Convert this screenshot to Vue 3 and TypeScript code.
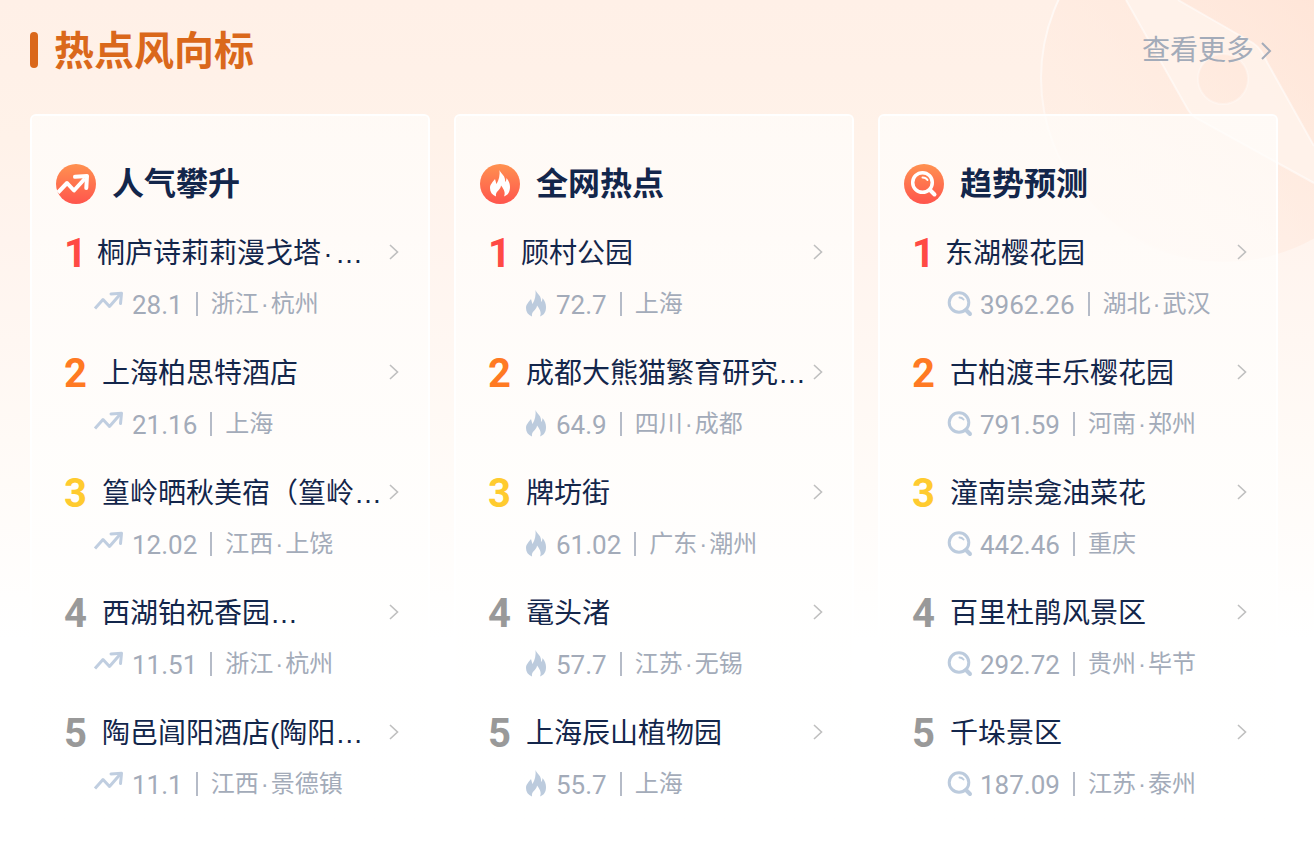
<script setup lang="ts">
type Kind = 'rise' | 'fire' | 'search'
interface Entry {
  name: string
  value: string
  place: string
}
interface Board {
  kind: Kind
  title: string
  entries: Entry[]
}

const boards: Board[] = [
  {
    kind: 'rise',
    title: '人气攀升',
    entries: [
      { name: '桐庐诗莉莉漫戈塔·…', value: '28.1', place: '浙江·杭州' },
      { name: '上海柏思特酒店', value: '21.16', place: '上海' },
      { name: '篁岭晒秋美宿（篁岭…', value: '12.02', place: '江西·上饶' },
      { name: '西湖铂祝香园…', value: '11.51', place: '浙江·杭州' },
      { name: '陶邑阊阳酒店(陶阳…', value: '11.1', place: '江西·景德镇' },
    ],
  },
  {
    kind: 'fire',
    title: '全网热点',
    entries: [
      { name: '顾村公园', value: '72.7', place: '上海' },
      { name: '成都大熊猫繁育研究…', value: '64.9', place: '四川·成都' },
      { name: '牌坊街', value: '61.02', place: '广东·潮州' },
      { name: '鼋头渚', value: '57.7', place: '江苏·无锡' },
      { name: '上海辰山植物园', value: '55.7', place: '上海' },
    ],
  },
  {
    kind: 'search',
    title: '趋势预测',
    entries: [
      { name: '东湖樱花园', value: '3962.26', place: '湖北·武汉' },
      { name: '古柏渡丰乐樱花园', value: '791.59', place: '河南·郑州' },
      { name: '潼南崇龛油菜花', value: '442.46', place: '重庆' },
      { name: '百里杜鹃风景区', value: '292.72', place: '贵州·毕节' },
      { name: '千垛景区', value: '187.09', place: '江苏·泰州' },
    ],
  },
]

const pieces = (text: string): string[] => text.split(/(·)/)
</script>

<template>
  <main class="panel">
    <svg class="compass" viewBox="0 0 274 264" aria-hidden="true">
      <defs>
        <linearGradient id="disc" x1="1" y1="0.1" x2="0.2" y2="0.8">
          <stop offset="0" stop-color="#ffdccb" stop-opacity="0.8" />
          <stop offset="1" stop-color="#ffe9dd" stop-opacity="0.3" />
        </linearGradient>
        <linearGradient id="rim" x1="0" y1="0" x2="0.5" y2="1">
          <stop offset="0" stop-color="#fff" stop-opacity="0.9" />
          <stop offset="1" stop-color="#fff" stop-opacity="0" />
        </linearGradient>
      </defs>
      <circle cx="184" cy="78" r="184" fill="url(#disc)" />
      <circle cx="184" cy="78" r="183" fill="none" stroke="url(#rim)" stroke-width="2" />
      <path
        d="M86 0 147 108Q150 114 156 118L274 183V146L227 62Q222 49 213 43L138 0Z M183 54a25 25 0 1 0 0.1 0Z"
        fill="#fff4ec"
        fill-opacity="0.8"
        fill-rule="evenodd"
      />
      <path
        d="M86 0 147 108Q150 114 156 118L274 183M138 0 213 43Q222 49 227 62L274 146"
        fill="none"
        stroke="#fff"
        stroke-opacity="0.5"
        stroke-width="2"
      />
      <circle cx="183" cy="79" r="25" fill="none" stroke="#fff" stroke-opacity="0.3" stroke-width="2" />
    </svg>

    <header class="head">
      <h1>热点风向标</h1>
      <a href="#" class="more">
        查看更多
        <svg width="12" height="20" viewBox="0 0 12 20" aria-hidden="true">
          <path d="M2 2 10 10 2 18" fill="none" stroke="#a3abb9" stroke-width="2" />
        </svg>
      </a>
    </header>

    <div class="boards">
      <section v-for="board in boards" :key="board.kind" class="board">
        <h2>
          <svg class="badge" viewBox="0 0 40 40" aria-hidden="true">
            <defs>
              <linearGradient :id="'badge-' + board.kind" x1="0" y1="0" x2="0" y2="1">
                <stop offset="0" stop-color="#ff9150" />
                <stop offset="1" stop-color="#ff554d" />
              </linearGradient>
            </defs>
            <circle cx="20" cy="20" r="20" :fill="`url(#badge-${board.kind})`" />
            <g v-if="board.kind === 'rise'" fill="none" stroke="#fff" stroke-width="4" stroke-linejoin="round">
              <path d="M2 28.500 11 19 18 26.500 29 14.500" />
              <path d="M19 12.800 31 12 30.300 24" stroke-linecap="round" />
            </g>
            <path
              v-else-if="board.kind === 'fire'"
              d="M19.500 6C21 10 26 12 25 18C26 17 26.500 15.500 26.500 14C29 17 30 20 30 23C30 28 28 31 24 32.500C25.500 29 24.500 26 21 21.500C21 26 15 27 16 32.500C12 31 10 28 10 24C10 20 13 18 15 15C16 18 16 19 16.500 20C19 16 20 11 19.500 6Z"
              fill="#fff"
            />
            <g v-else fill="none" stroke="#fff" stroke-linecap="round">
              <circle cx="18.500" cy="18.500" r="9.800" stroke-width="3.500" />
              <path d="M26 26 30.500 30.500" stroke-width="4" />
              <path d="M18.500 13.500Q22 13.500 23.500 16" stroke-width="2" />
            </g>
          </svg>
          {{ board.title }}
        </h2>

        <ol>
          <li v-for="(entry, i) in board.entries" :key="entry.name">
            <a href="#" class="entry">
              <span class="top">
                <span class="rank" :class="'rank-' + (i + 1)">{{ i + 1 }}</span>
                <span class="name"><span v-for="(p, k) in pieces(entry.name)" :key="k" :class="{ dot: p === '·' }">{{ p }}</span></span>
                <svg class="go" viewBox="0 0 10 16" aria-hidden="true">
                  <path d="M1 1 8.500 8 1 15" fill="none" stroke="#bfbfbf" stroke-width="1.600" />
                </svg>
              </span>
              <span class="meta">
                <svg class="icon" viewBox="0 0 40 28" aria-hidden="true">
                  <g v-if="board.kind === 'rise'" fill="none" stroke="#c0cee0" stroke-width="3" stroke-linejoin="round">
                    <path d="M3 18.500 11 9.500 17.500 16.500 28 4.500" />
                    <path d="M19 4 29.500 3.300 28.500 13.500" stroke-linecap="round" />
                  </g>
                  <path
                    v-else-if="board.kind === 'fire'"
                    d="M19.500 0C21 4 26 6 25 12C26 11 26.500 9.500 26.500 8C29 11 30 14 30 17C30 22 28 25 24 26.500C25.500 23 24.500 20 21 15.500C21 20 15 21 16 26.500C12 25 10 22 10 18C10 14 13 12 15 9C16 12 16 13 16.500 14C19 10 20 5 19.500 0Z"
                    fill="#bccbdd"
                  />
                  <g v-else fill="none" stroke="#bccbdd" stroke-linecap="round">
                    <circle cx="19" cy="12.500" r="9.800" stroke-width="3" />
                    <path d="M26 20 30 24" stroke-width="4" />
                    <path d="M19.500 7.500Q22 7.500 23.500 9.500" stroke-width="2" />
                  </g>
                </svg>
                <span class="value">{{ entry.value }}</span>
                <span class="place"><span v-for="(p, k) in pieces(entry.place)" :key="k" :class="{ dot: p === '·' }">{{ p }}</span></span>
              </span>
            </a>
          </li>
        </ol>
      </section>
    </div>
  </main>
</template>

<style>
body {
  margin: 0;
  background: #fff;
}
</style>

<style scoped>
.panel {
  position: relative;
  box-sizing: border-box;
  min-height: 100vh;
  padding: 24px 36px 20px 30px;
  overflow: hidden;
  background: linear-gradient(#fff0e7 0, #fff2e9 140px, #fff4ee 240px, #fffaf6 440px, #fff 640px);
  font-family: "Liberation Sans", "Noto Sans CJK SC", sans-serif;
  color: #13264b;
}
.compass {
  position: absolute;
  top: 0;
  right: 0;
  width: 274px;
  height: 264px;
}
.head,
.boards {
  position: relative;
}
.head {
  display: flex;
  align-items: center;
  justify-content: space-between;
  height: 54px;
}
h1 {
  display: flex;
  align-items: center;
  gap: 16px;
  margin: 0;
  font-size: 40px;
  line-height: 54px;
  font-weight: 700;
  color: #da681b;
}
h1::before {
  content: "";
  width: 8px;
  height: 36px;
  margin-bottom: 2px;
  border-radius: 4px;
  background: #da681b;
}
.more {
  display: flex;
  align-items: center;
  gap: 6px;
  margin-right: 6px;
  font-size: 28px;
  line-height: 40px;
  color: #a3abb9;
  text-decoration: none;
}
.boards {
  display: grid;
  grid-template-columns: repeat(3, minmax(0, 1fr));
  gap: 24px;
  margin-top: 36px;
}
.board {
  padding: 44px 24px 0;
  border: 2px solid #fff;
  border-bottom: 0;
  border-radius: 6px 6px 0 0;
  background: linear-gradient(rgba(255, 254, 252, 0.68), rgba(255, 255, 255, 0.7));
  background-clip: padding-box;
}
h2 {
  display: flex;
  align-items: center;
  gap: 16px;
  margin: 0;
  font-size: 32px;
  line-height: 48px;
  font-weight: 700;
}
.badge {
  width: 40px;
  height: 40px;
}
ol {
  margin: 22px 0 0;
  padding: 0;
  list-style: none;
}
li {
  height: 120px;
}
.entry {
  display: block;
  color: inherit;
  text-decoration: none;
}
.top {
  display: flex;
  align-items: center;
  height: 44px;
  padding: 0 5px 0 8px;
}
.rank {
  flex: none;
  width: 38px;
  padding-top: 4px;
  font: 700 40px/44px Roboto, sans-serif;
  color: #999;
}
.rank-1 {
  width: 33px;
  color: #ff4a44;
}
.rank-2 {
  color: #ff7a23;
}
.rank-3 {
  color: #ffcb2f;
}
.name {
  flex: 1;
  min-width: 0;
  padding-top: 4px;
  white-space: nowrap;
  font-size: 28px;
  line-height: 40px;
}
.dot {
  display: inline-block;
  width: 12px;
  text-align: center;
}
.name .dot {
  width: 14px;
}
.go {
  flex: none;
  width: 10px;
  height: 16px;
}
.meta {
  display: flex;
  align-items: center;
  height: 36px;
  margin-top: 12px;
  padding-left: 36px;
  font-size: 24px;
  line-height: 36px;
  color: #a3abb9;
}
.icon {
  flex: none;
  width: 40px;
  height: 28px;
}
.value {
  padding-top: 2px;
  font: 400 26px/36px Roboto, sans-serif;
}
.place {
  display: flex;
  align-items: center;
}
.place::before {
  content: "";
  width: 2px;
  height: 24px;
  margin: 0 13px;
  background: #b5bbc7;
}
</style>
